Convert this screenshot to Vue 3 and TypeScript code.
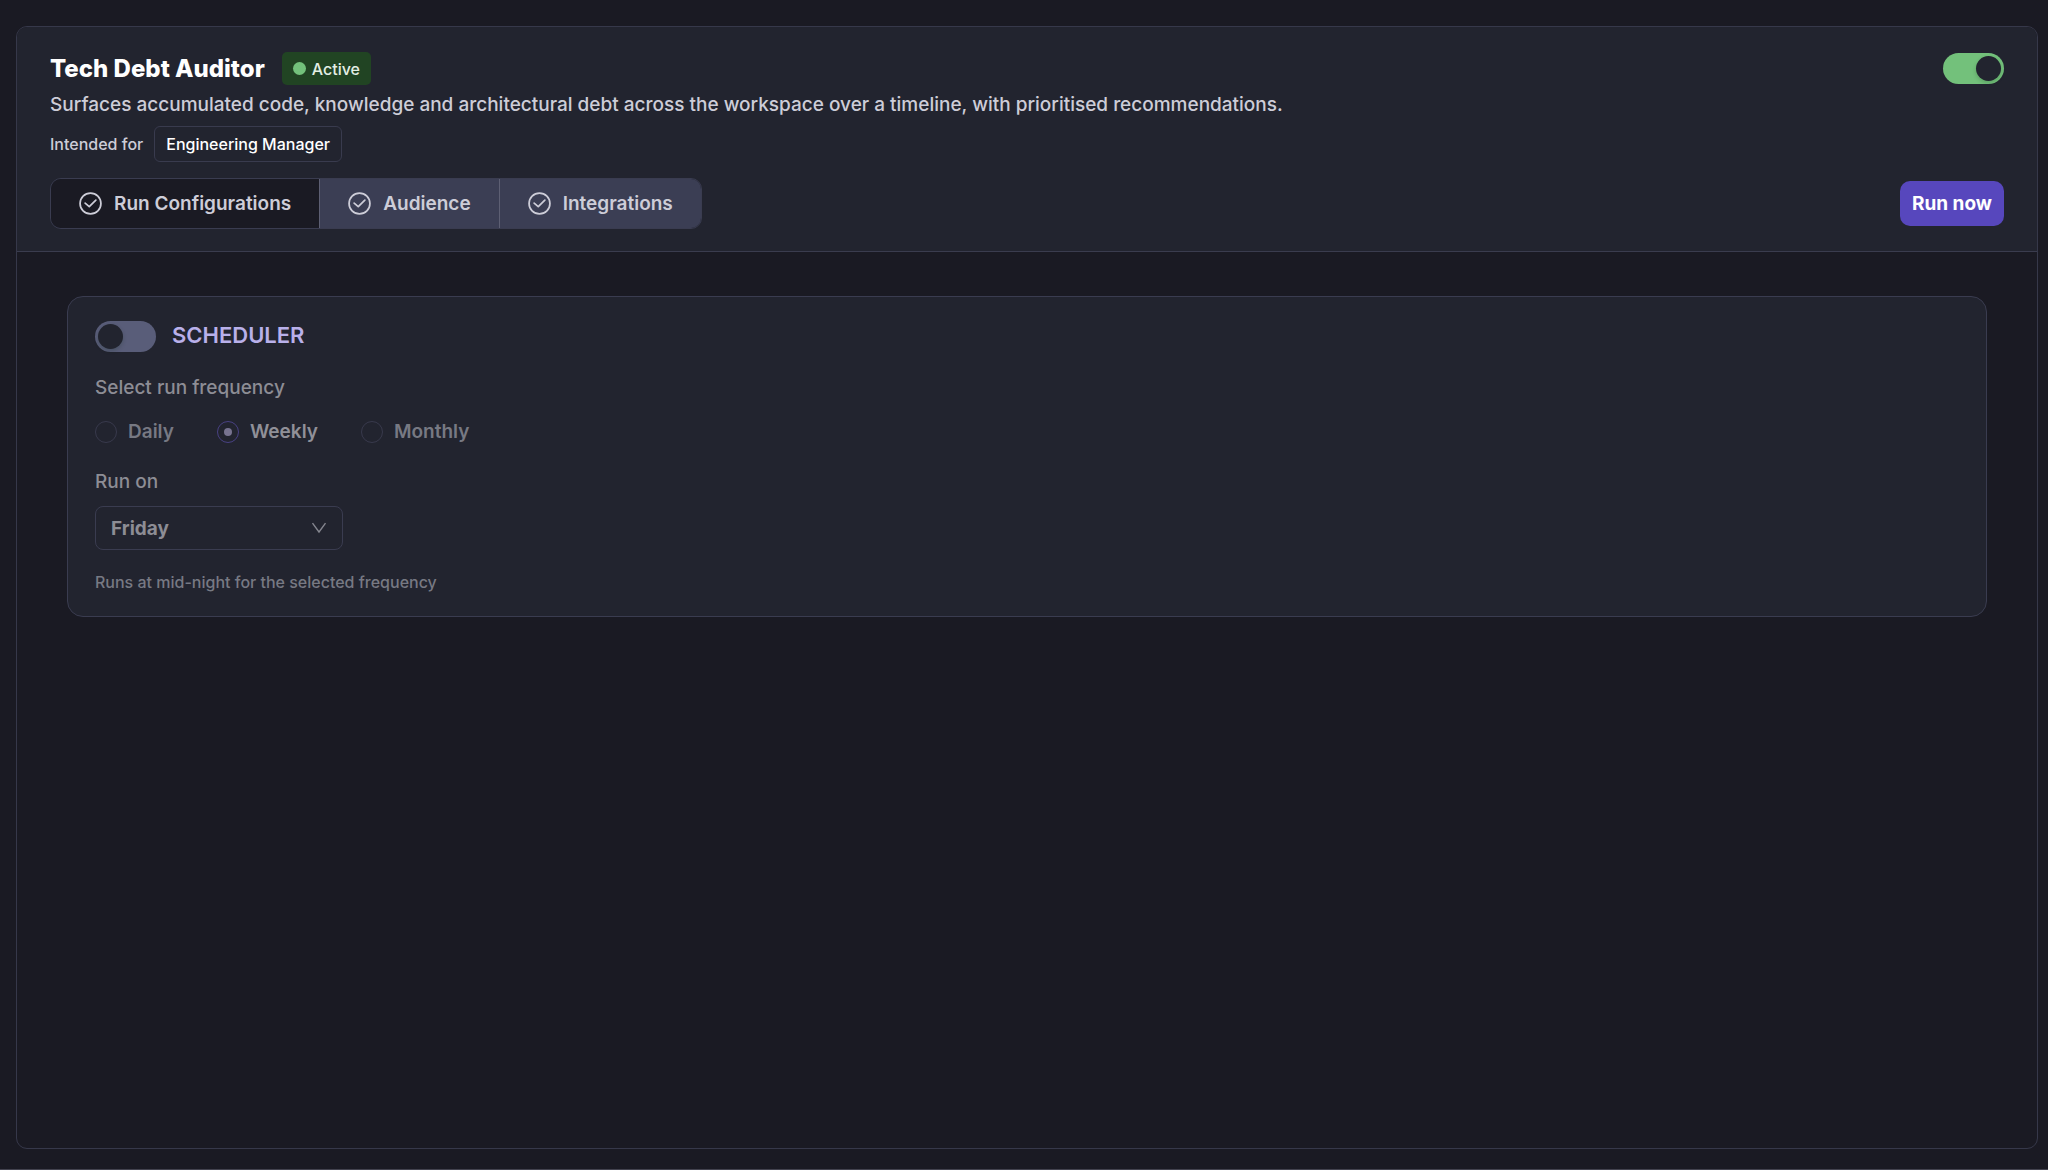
<script setup lang="ts">
import { ref } from 'vue'

interface Tab {
  id: string
  label: string
}

const tabs: Tab[] = [
  { id: 'run', label: 'Run Configurations' },
  { id: 'audience', label: 'Audience' },
  { id: 'integrations', label: 'Integrations' },
]
const frequencies: string[] = ['Daily', 'Weekly', 'Monthly']
const days: string[] = ['Monday', 'Tuesday', 'Wednesday', 'Thursday', 'Friday', 'Saturday', 'Sunday']

const activeTab = ref<string>('run')
const agentEnabled = ref<boolean>(true)
const schedulerEnabled = ref<boolean>(false)
const frequency = ref<string>('Weekly')
const day = ref<string>('Friday')
</script>

<template>
  <div class="page">
    <main class="panel">
      <header class="header">
        <div class="row">
          <div class="title-group">
            <h1 class="title">Tech Debt Auditor</h1>
            <span class="badge"><span class="dot"></span>Active</span>
          </div>
          <input v-model="agentEnabled" class="switch" type="checkbox" role="switch" aria-label="Agent enabled" />
        </div>
        <p class="description">
          Surfaces accumulated code, knowledge and architectural debt across the workspace over a timeline, with
          prioritised recommendations.
        </p>
        <div class="intended">
          <span>Intended for</span>
          <span class="tag">Engineering Manager</span>
        </div>
        <div class="row">
          <nav class="tabs" role="tablist">
            <button
              v-for="tab in tabs"
              :key="tab.id"
              type="button"
              role="tab"
              class="tab"
              :class="{ active: tab.id === activeTab }"
              :aria-selected="tab.id === activeTab"
              @click="activeTab = tab.id"
            >
              <svg class="check" viewBox="0 0 24 24" aria-hidden="true">
                <circle cx="12" cy="12" r="10.9" />
                <path d="M6.4 11.6 10.7 15.2 17.6 8.4" />
              </svg>
              {{ tab.label }}
            </button>
          </nav>
          <button type="button" class="run">Run now</button>
        </div>
      </header>

      <div class="body">
        <section class="card">
          <label class="card-head">
            <input v-model="schedulerEnabled" class="switch" type="checkbox" role="switch" />
            <span class="card-title">SCHEDULER</span>
          </label>
          <fieldset class="fields" :class="{ off: !schedulerEnabled }" :disabled="!schedulerEnabled">
            <legend class="label">Select run frequency</legend>
            <div class="radios">
              <label v-for="item in frequencies" :key="item" class="option" :class="{ chosen: item === frequency }">
                <input v-model="frequency" class="radio" type="radio" name="frequency" :value="item" />
                {{ item }}
              </label>
            </div>
            <label class="label" for="run-day">Run on</label>
            <div class="select-box">
              <select id="run-day" v-model="day" class="select">
                <option v-for="name in days" :key="name" :value="name">{{ name }}</option>
              </select>
              <svg class="chevron" viewBox="0 0 16 12" aria-hidden="true">
                <path d="M1.5 1.2 8 10 14.5 1.2" />
              </svg>
            </div>
            <p class="note">Runs at mid-night for the selected frequency</p>
          </fieldset>
        </section>
      </div>
    </main>
  </div>
</template>

<style>
body {
  margin: 0;
  background: #1a1a23;
}
</style>

<style scoped>
* {
  box-sizing: border-box;
}

.page {
  display: flex;
  min-height: 100vh;
  padding: 26px 10px 20px 16px;
  border-bottom: 1px solid #43434f;
  font-family: Inter, 'Liberation Sans', sans-serif;
  font-size: 19px;
  line-height: 24px;
  color: #cdcdd8;
  background: #1a1a23;
}

button,
select {
  font: inherit;
}

.panel {
  flex: 1;
  min-width: 0;
  border: 1px solid #36384a;
  border-radius: 11px;
  overflow: hidden;
}

.header {
  padding: 25px 33px 22px;
  border-bottom: 1px solid #3a3c4e;
  background: #22242f;
}

.row {
  display: flex;
  align-items: center;
  justify-content: space-between;
}

.title-group {
  display: flex;
  align-items: center;
  gap: 17px;
}

.title {
  margin: 0;
  font-size: 24px;
  font-weight: 800;
  line-height: 32px;
  color: #fff;
}

.badge {
  display: flex;
  align-items: center;
  gap: 6px;
  height: 33px;
  padding: 0 11px;
  border-radius: 5px;
  font-size: 16px;
  font-weight: 500;
  color: #e3eee4;
  background: #214423;
}

.dot {
  width: 13px;
  height: 13px;
  border-radius: 50%;
  background: #73c17b;
}

.description {
  margin: 6px 0 7px;
  font-weight: 500;
  line-height: 28px;
}

.intended {
  display: flex;
  align-items: center;
  gap: 11px;
  margin-bottom: 16px;
  font-size: 16px;
  font-weight: 500;
}

.tag {
  height: 36px;
  padding: 0 11px;
  border: 1px solid #393b4e;
  border-radius: 6px;
  line-height: 34px;
  color: #fff;
}

.tabs {
  display: flex;
  border: 1px solid #3a3c50;
  border-radius: 11px;
  overflow: hidden;
}

.tab {
  display: flex;
  align-items: center;
  gap: 12px;
  height: 49px;
  padding: 0 28px;
  border: 0;
  border-right: 1px solid #5d5f73;
  font-weight: 600;
  color: #cdcdd8;
  background: #3b3e54;
}

.tab:last-child {
  border-right: 0;
}

.tab.active {
  background: #1a1a23;
}

.check {
  width: 23px;
  height: 23px;
  fill: none;
  stroke: currentColor;
  stroke-width: 1.8;
  stroke-linecap: round;
  stroke-linejoin: round;
}

.run {
  height: 45px;
  padding: 0 12px;
  border: 0;
  border-radius: 10px;
  font-weight: 700;
  color: #fff;
  background: #5747bd;
}

.switch {
  appearance: none;
  display: flex;
  width: 61px;
  height: 31px;
  margin: 0;
  padding: 3px;
  border-radius: 16px;
  background: #595d79;
}

.switch::before {
  content: '';
  width: 25px;
  height: 25px;
  border-radius: 50%;
  background: #22242f;
  box-shadow: 0 2px 4px rgba(0, 35, 11, 0.2);
}

.switch:checked {
  justify-content: flex-end;
  background: #73c17b;
}

.body {
  padding: 44px 50px;
}

.card {
  padding: 24px 27px 21px;
  border: 1px solid #3a3c50;
  border-radius: 16px;
  background: #22242f;
}

.card-head {
  display: flex;
  align-items: flex-start;
  gap: 16px;
  margin-bottom: 24px;
}

.card-title {
  font-size: 22px;
  font-weight: 600;
  line-height: 28px;
  color: #b9b0ea;
}

.fields {
  min-width: 0;
  margin: 0;
  padding: 0;
  border: 0;
}

.fields.off {
  color: #8d8d95;
}

.label {
  display: block;
  padding: 0;
  font-weight: 500;
}

.radios {
  display: flex;
  gap: 43px;
  margin: 20px 0 26px;
}

.option {
  display: flex;
  align-items: center;
  gap: 11px;
  font-weight: 600;
  color: #777983;
}

.option.chosen {
  color: #909098;
}

.radio {
  appearance: none;
  display: grid;
  place-items: center;
  width: 22px;
  height: 22px;
  margin: 0;
  border: 1px solid #38394c;
  border-radius: 50%;
}

.radio:checked {
  border-color: #484182;
}

.radio:checked::before {
  content: '';
  width: 8px;
  height: 8px;
  border-radius: 50%;
  background: #77738f;
}

.select-box {
  position: relative;
  width: 248px;
  margin: 12px 0 20px;
}

.select {
  appearance: none;
  display: block;
  width: 100%;
  height: 44px;
  padding: 2px 40px 0 15px;
  border: 1px solid #3a3c50;
  border-radius: 8px;
  font-weight: 700;
  color: inherit;
  background: transparent;
  opacity: 1;
}

.chevron {
  position: absolute;
  top: 16px;
  right: 16px;
  width: 16px;
  height: 12px;
  fill: none;
  stroke: #85868f;
  stroke-width: 1.4;
  pointer-events: none;
}

.note {
  margin: 0 0 1px;
  font-size: 16px;
  font-weight: 500;
  color: #777983;
}
</style>
